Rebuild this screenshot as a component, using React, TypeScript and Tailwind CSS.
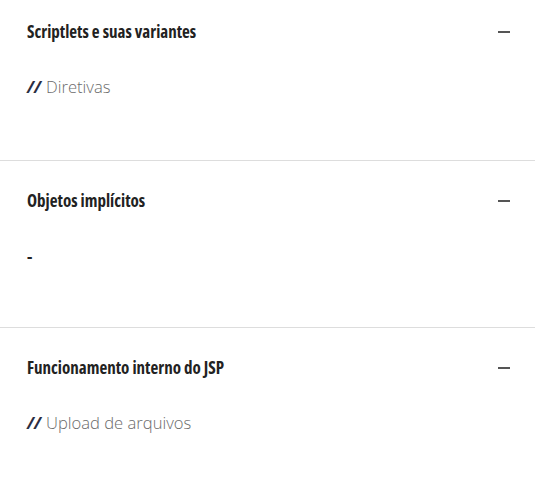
import React from 'react';

interface Topic {
  title: string;
  item: string | null;
}

const topics: Topic[] = [
  { title: 'Scriptlets e suas variantes', item: 'Diretivas' },
  { title: 'Objetos implícitos', item: null },
  { title: 'Funcionamento interno do JSP', item: 'Upload de arquivos' },
];

const TopicBlock: React.FC<{ topic: Topic; index: number; last: boolean }> = ({ topic, index, last }) => (
  <div
    className={`pl-[27px] pr-[25px] ${index === 0 ? 'pt-[21px] h-[161px]' : 'pt-[29px] h-[167px]'} ${
      last ? '' : 'border-b border-[#dddddd]'
    }`}
  >
    <div className="flex items-center justify-between h-[22px]">
      <h3 className="text-[17px] font-bold font-stretch-semi-condensed text-[#222222]">
        {topic.title}
      </h3>
      <span className="block w-[12px] h-[2px] bg-[#555555]" />
    </div>
    <div className="mt-[33px] h-[22px] flex items-center text-[16.6px]">
      {topic.item ? (
        <>
          <span className="font-bold italic text-[#2b2d42] mr-[5px]">//</span>
          <span className="font-light text-[#6b6b6b]">{topic.item}</span>
        </>
      ) : (
        <span className="font-bold text-[#222222]">-</span>
      )}
    </div>
  </div>
);

export default function App() {
  return (
    <div className="w-[535px] h-[479px] bg-white font-['Open_Sans',sans-serif]">
      {topics.map((t, i) => (
        <TopicBlock key={t.title} topic={t} index={i} last={i === topics.length - 1} />
      ))}
    </div>
  );
}
